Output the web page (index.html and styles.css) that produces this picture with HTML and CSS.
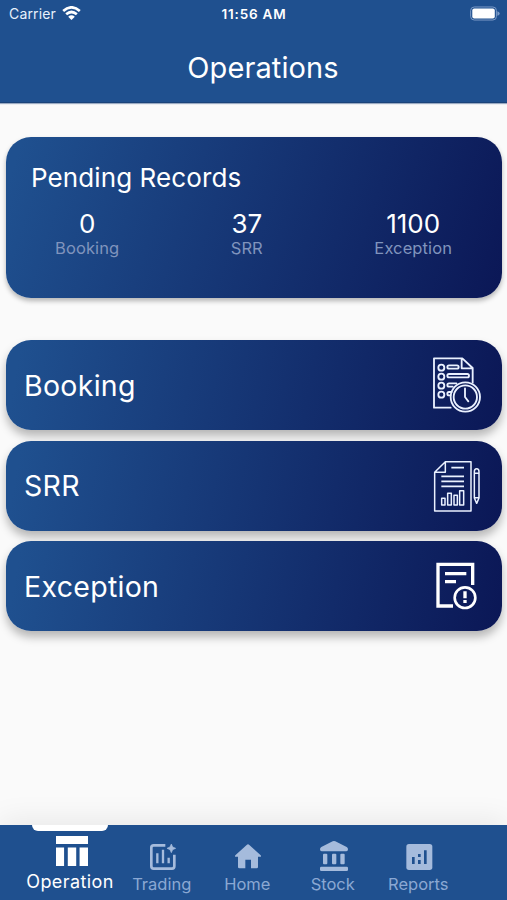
FILE: index.html
```html
<!DOCTYPE html>
<html lang="en">
<head>
<meta charset="utf-8">
<title>Operations</title>
<link rel="stylesheet" href="styles.css">
</head>
<body>
<header class="header">
  <div class="status">
    <div class="carrier"><span>Carrier</span>
      <svg class="wifi" viewBox="185 17 56 42"><g fill="none" stroke="#fff" stroke-width="8"><path d="M188 32Q213 10 238 32"/><path d="M197 42Q213 28 229 42"/></g><path fill="#fff" d="M203 49Q213 41 223 49L213 59Z"/></svg>
    </div>
    <div class="time">11:56 AM</div>
    <svg class="battery" viewBox="0 0 92 44"><rect x="2" y="2" width="79" height="40" rx="11" fill="none" stroke="#7d9cc8" stroke-width="3"/><rect x="7" y="7" width="69" height="30" rx="6" fill="#fff"/><path d="M84 15q7 2 7 7t-7 7z" fill="#7d9cc8"/></svg>
  </div>
  <h1 class="title">Operations</h1>
</header>
<main class="main">
  <section class="card pending">
    <h2 class="pending-title">Pending Records</h2>
    <div class="stats">
      <div class="stat"><b>0</b><span>Booking</span></div>
      <div class="stat"><b>37</b><span>SRR</span></div>
      <div class="stat"><b>1100</b><span>Exception</span></div>
    </div>
  </section>
  <div class="rows">
    <div class="card row"><span>Booking</span>
      <svg class="row-icon" viewBox="45 45 168 180" fill="none" stroke="#eaf1ff" stroke-width="5.5" stroke-linejoin="round" stroke-linecap="round">
        <path d="M107 203H57V55H142L173 84V128M140 55V85H173"/>
        <circle cx="79" cy="83" r="9"/><circle cx="79" cy="110" r="9"/><circle cx="79" cy="137" r="9"/><circle cx="79" cy="164" r="9"/>
        <rect x="97" y="76" width="34" height="10" rx="5"/><rect x="97" y="102" width="65" height="10" rx="5"/>
        <path d="M124 130H102a5 5 0 0 0 0 10H113M110 156H102a5 5 0 0 0 0 10H106"/>
        <circle cx="151" cy="171" r="44"/><circle cx="151" cy="171" r="35"/><path d="M150 145V171L160 184"/>
      </svg>
    </div>
    <div class="card row"><span>SRR</span>
      <svg class="row-icon" viewBox="45 46 168 180" fill="none" stroke="#eaf1ff" stroke-width="4.5" stroke-linejoin="round">
        <path d="M91 63H168V211H59V95ZM91 63V95H59"/>
        <path d="M109 81H147M79 107H147M79 122H147M79 137H147" stroke-width="5"/>
        <rect x="80" y="173" width="10" height="20"/><rect x="98" y="158" width="11" height="35"/><rect x="117" y="164" width="10" height="29"/><rect x="134" y="150" width="12" height="43"/>
        <path d="M178 93Q178 84 185 84T192 93V172L185 188L178 172ZM178 98H192M178 171H192"/>
      </svg>
    </div>
    <div class="card row"><span>Exception</span>
      <svg class="row-icon" viewBox="45 48 168 180" fill="none" stroke="#fff" stroke-width="10">
        <path d="M114 198H69V73H173V135M90 101H154M90 125H123"/>
        <circle cx="150" cy="173" r="31" stroke-width="8"/><path d="M150 154V175M150 180V189"/>
      </svg>
    </div>
  </div>
</main>
<nav class="nav">
  <div class="tab active">
    <svg class="op-icon" viewBox="168 63 95 89" fill="#fff"><path d="M168 63H263V87H168ZM168 97H192V152H168ZM203 97H228V152H203ZM238 97H263V152H238Z"/></svg>
    <span>Operation</span>
  </div>
  <div class="tab">
    <svg class="tab-icon" viewBox="437 75 102 102" fill="none" stroke="#a5bbdc" stroke-width="8"><path d="M495 91H460Q453 91 453 98V153Q453 161 460 161H515Q522 161 522 153V119" /><path d="M471 115V145M488 104V145M505 128V145" stroke-width="7"/><path fill="#a5bbdc" stroke="#a5bbdc" stroke-width="2" stroke-linejoin="round" d="M513 87L517 96L526 100L517 104L513 113L509 104L500 100L509 96Z"/></svg>
    <span>Trading</span>
  </div>
  <div class="tab">
    <svg class="tab-icon" viewBox="33 75 102 102" fill="#a5bbdc"><path d="M80 90Q84 86 88 90L122 121Q125 125 120 125H114V156Q114 160 110 160H93V134H76V160H58Q54 160 54 156V125H48Q43 125 46 121Z"/></svg>
    <span>Home</span>
  </div>
  <div class="tab">
    <svg class="tab-icon" viewBox="288 75 102 102" fill="#a5bbdc"><path d="M335 79Q339 77 343 79L377 96Q381 98 381 103Q381 109 376 109H302Q297 109 297 103Q297 98 301 96Z"/><rect x="306" y="116" width="13" height="32" rx="3"/><rect x="333" y="116" width="13" height="32" rx="3"/><rect x="358" y="116" width="13" height="32" rx="3"/><rect x="297" y="155" width="84" height="13" rx="4"/></svg>
    <span>Stock</span>
  </div>
  <div class="tab">
    <svg class="tab-icon" viewBox="547 75 102 102"><rect x="560" y="87" width="78" height="78" rx="8" fill="#a5bbdc"/><path d="M581 126V147M599 135V147M599 117V126M617 106V147" stroke="#1f508f" stroke-width="8"/></svg>
    <span>Reports</span>
  </div>
</nav>
</body>
</html>
```
FILE: styles.css
```css
* { box-sizing: border-box; }
body {
  margin: 0;
  height: 900px;
  display: flex;
  flex-direction: column;
  overflow: hidden;
  background: #fafafa;
  color: #fff;
  font-family: Inter, Roboto, sans-serif;
}
.header {
  height: 103px;
  background: #1f508f;
  border-bottom: 1px solid #1b4379;
  box-shadow: 0 1px 1px #9aaac2;
}
.status {
  height: 28px;
  padding: 0 7px 0 9px;
  display: grid;
  grid-template-columns: 1fr auto 1fr;
  align-items: center;
}
.carrier { display: flex; align-items: center; gap: 6px; font-size: 14px; letter-spacing: .15px; color: #e8f0fc; }
.carrier span { margin-top: -1px; }
.wifi { width: 19px; height: 14px; margin-top: -2px; }
.time { margin-right: 1px; font-size: 13.5px; font-weight: 600; letter-spacing: .8px; margin-top: -1px; }
.battery { width: 30px; height: 15px; justify-self: end; margin-top: -1px; }
.title { margin: 22px 0 0 19px; text-align: center; font-size: 29px; line-height: 36px; font-weight: 400; letter-spacing: .1px; }
.main { flex: 1; padding: 34px 5px 0 6px; }
.card {
  border-radius: 25px;
  background: linear-gradient(108deg, #1f508f 3%, #0b1756 100%);
  box-shadow: 0 3px 5px rgba(0, 0, 0, .28);
}
.pending { height: 161px; padding-top: 24px; }
.pending-title { margin: 0 0 0 25px; font-size: 26px; line-height: 34px; font-weight: 400; letter-spacing: .1px; }
.stats { display: flex; justify-content: space-between; padding: 13px 50px 0 49px; }
.stat { display: flex; flex-direction: column; align-items: center; }
.stat b { font-size: 26px; line-height: 31px; font-weight: 400; }
.stat span { font-size: 16.5px; line-height: 18px; color: #8094bd; letter-spacing: .1px; }
.rows { margin-top: 42px; display: flex; flex-direction: column; gap: 10.5px; }
.row {
  height: 90px;
  padding: 0 16.5px 0 18px;
  display: flex;
  align-items: center;
  justify-content: space-between;
  font-size: 28.5px;
  letter-spacing: .3px;
  background: linear-gradient(100deg, #1f508f 3%, #0b1756 100%);
  box-shadow: 0 6px 10px rgba(0, 0, 0, .28);
}
.row-icon { width: 56px; height: 60px; }
.nav {
  height: 75px;
  padding: 0 45px 0 19px;
  display: flex;
  background: #1f508f;
  box-shadow: 0 -4px 30px rgba(0, 0, 0, .08);
}
.tab {
  width: 85.5px;
  display: flex;
  flex-direction: column;
  align-items: center;
  padding-top: 15px;
  color: #8ba8d3;
  font-size: 16.5px;
  line-height: 20px;
}
.tab span { margin-left: -2px; }
.tab-icon { width: 34px; height: 34px; }
.active { position: relative; width: 101px; padding-top: 11px; color: #fff; font-size: 18px; line-height: 22px; letter-spacing: .4px; }
.active span { margin-left: 1px; }
.active::before {
  content: "";
  position: absolute;
  top: 0;
  left: 13px;
  width: 76px;
  height: 6px;
  border-radius: 0 0 6px 6px;
  background: #fff;
}
.op-icon { width: 32px; height: 30px; margin-bottom: 5px; margin-left: 5px; }
```
